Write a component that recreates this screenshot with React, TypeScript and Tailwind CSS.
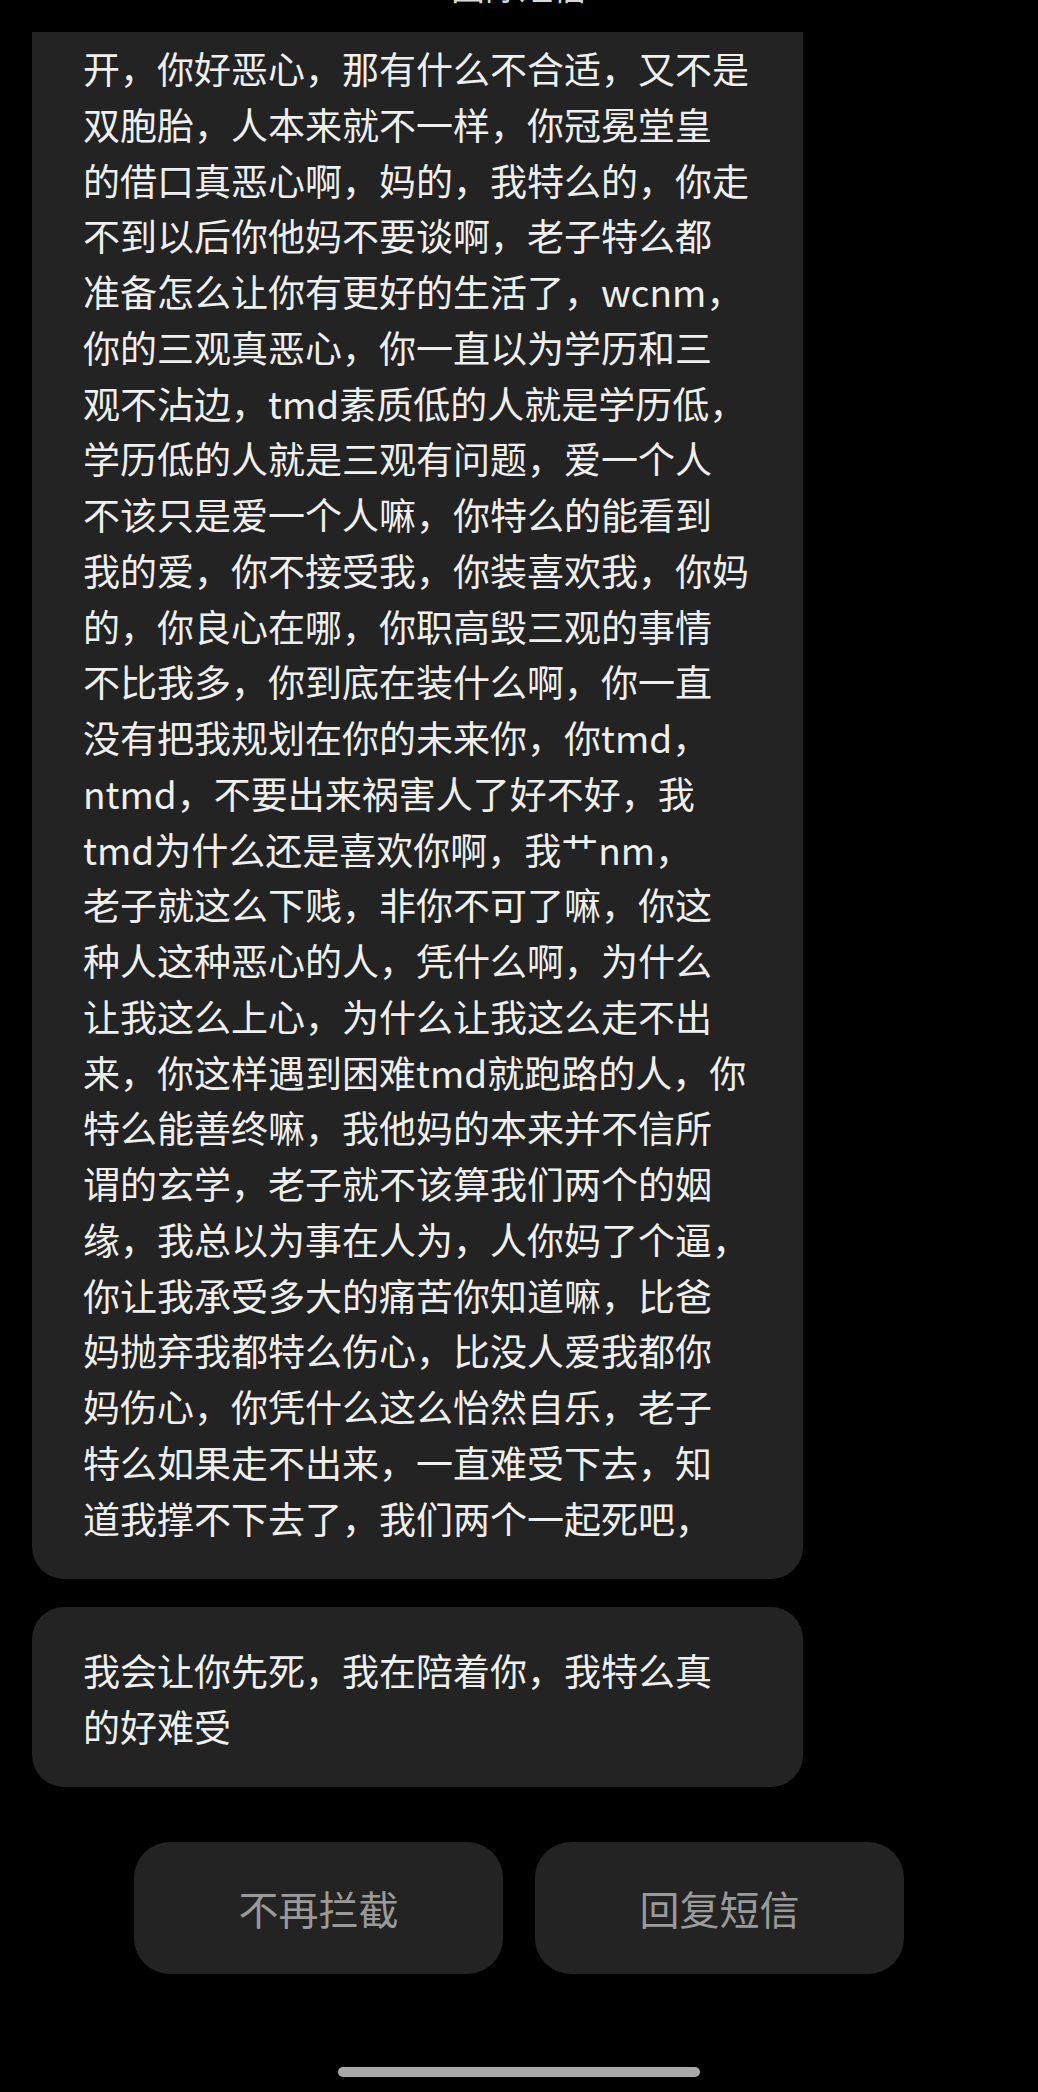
import React from "react";

const lines1 = [
  "开，你好恶心，那有什么不合适，又不是",
  "双胞胎，人本来就不一样，你冠冕堂皇",
  "的借口真恶心啊，妈的，我特么的，你走",
  "不到以后你他妈不要谈啊，老子特么都",
  "准备怎么让你有更好的生活了，wcnm，",
  "你的三观真恶心，你一直以为学历和三",
  "观不沾边，tmd素质低的人就是学历低，",
  "学历低的人就是三观有问题，爱一个人",
  "不该只是爱一个人嘛，你特么的能看到",
  "我的爱，你不接受我，你装喜欢我，你妈",
  "的，你良心在哪，你职高毁三观的事情",
  "不比我多，你到底在装什么啊，你一直",
  "没有把我规划在你的未来你，你tmd，",
  "ntmd，不要出来祸害人了好不好，我",
  "tmd为什么还是喜欢你啊，我艹nm，",
  "老子就这么下贱，非你不可了嘛，你这",
  "种人这种恶心的人，凭什么啊，为什么",
  "让我这么上心，为什么让我这么走不出",
  "来，你这样遇到困难tmd就跑路的人，你",
  "特么能善终嘛，我他妈的本来并不信所",
  "谓的玄学，老子就不该算我们两个的姻",
  "缘，我总以为事在人为，人你妈了个逼，",
  "你让我承受多大的痛苦你知道嘛，比爸",
  "妈抛弃我都特么伤心，比没人爱我都你",
  "妈伤心，你凭什么这么怡然自乐，老子",
  "特么如果走不出来，一直难受下去，知",
  "道我撑不下去了，我们两个一起死吧，",
];

const lines2 = ["我会让你先死，我在陪着你，我特么真", "的好难受"];

export default function App() {
  return (
    <div
      className="w-[1038px] h-[2092px] bg-black flex flex-col overflow-hidden"
      style={{ fontFamily: '"Noto Sans CJK SC", "Noto Sans", sans-serif' }}
    >
      <div className="h-[32px] overflow-hidden flex justify-center">
        <div className="text-[34px] leading-[40px] -mt-[34px] text-[#d8d8d8] whitespace-nowrap">
          国际短信
        </div>
      </div>
      <div className="px-[32px] flex flex-col gap-[28px]">
        <div className="w-[771px] bg-[#232323] rounded-b-[32px] pl-[51px] pr-[20px] pt-[9px] pb-[33px] text-[37px] leading-[55.75px] text-[#efefef]">
          {lines1.map((l, i) => (
            <div key={i} className="whitespace-nowrap">
              {l}
            </div>
          ))}
        </div>
        <div className="w-[771px] bg-[#232323] rounded-[32px] pl-[51px] pr-[20px] pt-[36px] pb-[32px] text-[37px] leading-[55.75px] text-[#efefef]">
          {lines2.map((l, i) => (
            <div key={i} className="whitespace-nowrap">
              {l}
            </div>
          ))}
        </div>
      </div>
      <div className="mt-[55px] flex justify-center gap-[32px]">
        <div className="w-[369px] h-[132px] rounded-[36px] bg-[#232323] flex items-center justify-center text-[40px] text-[#9a9a9a]">
          不再拦截
        </div>
        <div className="w-[369px] h-[132px] rounded-[36px] bg-[#232323] flex items-center justify-center text-[40px] text-[#9a9a9a]">
          回复短信
        </div>
      </div>
      <div className="mt-[93px] flex justify-center">
        <div className="w-[362px] h-[10px] rounded-full bg-[#a8a8a8]" />
      </div>
    </div>
  );
}
